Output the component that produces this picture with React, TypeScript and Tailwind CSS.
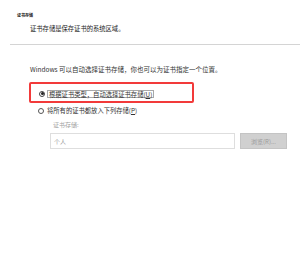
import React from "react";

const font = { fontFamily: '"Noto Sans CJK SC", "Noto Sans", sans-serif' };

export default function App() {
  return (
    <div className="w-[300px] h-[258px] bg-white overflow-hidden flex flex-col" style={font}>
      <div className="mt-[13px] ml-[17px] h-[5px] leading-[5px] text-[4px] font-bold text-[#111]">证书存储</div>
      <div className="mt-[8px] ml-[30px] h-[6px] leading-[6px] text-[6.3px] text-[#222]">证书存储是保存证书的系统区域。</div>
      <div className="mt-[12px] ml-[10px] h-px bg-[#d4d4d4]" />
      <div className="mt-[20px] ml-[30px] h-[8px] leading-[8px] text-[6.5px] text-[#333] whitespace-nowrap">
        Windows 可以自动选择证书存储，你也可以为证书指定一个位置。
      </div>
      <div className="mt-[9px] ml-[29px] w-[165px] h-[21px] border-2 border-[#f23a3a] rounded-[2px] flex items-center pl-[8px] pt-[2px]">
        <div className="w-[6px] h-[6px] rounded-full border border-[#444] flex items-center justify-center">
          <div className="w-[3px] h-[3px] rounded-full bg-[#222]" />
        </div>
        <div className="ml-[2px] h-[8px] leading-[7px] px-[1px] border border-[#a8a8a8] text-[6.3px] text-[#333] whitespace-nowrap">
          根据证书类型，自动选择证书存储(<span className="underline">U</span>)
        </div>
      </div>
      <div className="mt-[4px] ml-[38px] h-[8px] flex items-center">
        <div className="w-[6px] h-[6px] rounded-full border border-[#555]" />
        <div className="ml-[3px] leading-[8px] text-[6.3px] text-[#333] whitespace-nowrap">
          将所有的证书都放入下列存储(<span className="underline">P</span>)
        </div>
      </div>
      <div className="mt-[6px] ml-[53px] h-[8px] leading-[8px] text-[6px] text-[#a0a0a0]">证书存储:</div>
      <div className="mt-[4px] ml-[50px] flex gap-[5px]">
        <div className="w-[185px] h-[16px] border border-[#dedede] flex items-center pl-[3px] text-[6px] text-[#9a9a9a]">个人</div>
        <div className="w-[47px] h-[16px] border border-[#c4c4c4] bg-[#d0d0d0] flex items-center justify-center text-[6px] text-[#9a9a9a]">
          浏览(R)...
        </div>
      </div>
    </div>
  );
}
